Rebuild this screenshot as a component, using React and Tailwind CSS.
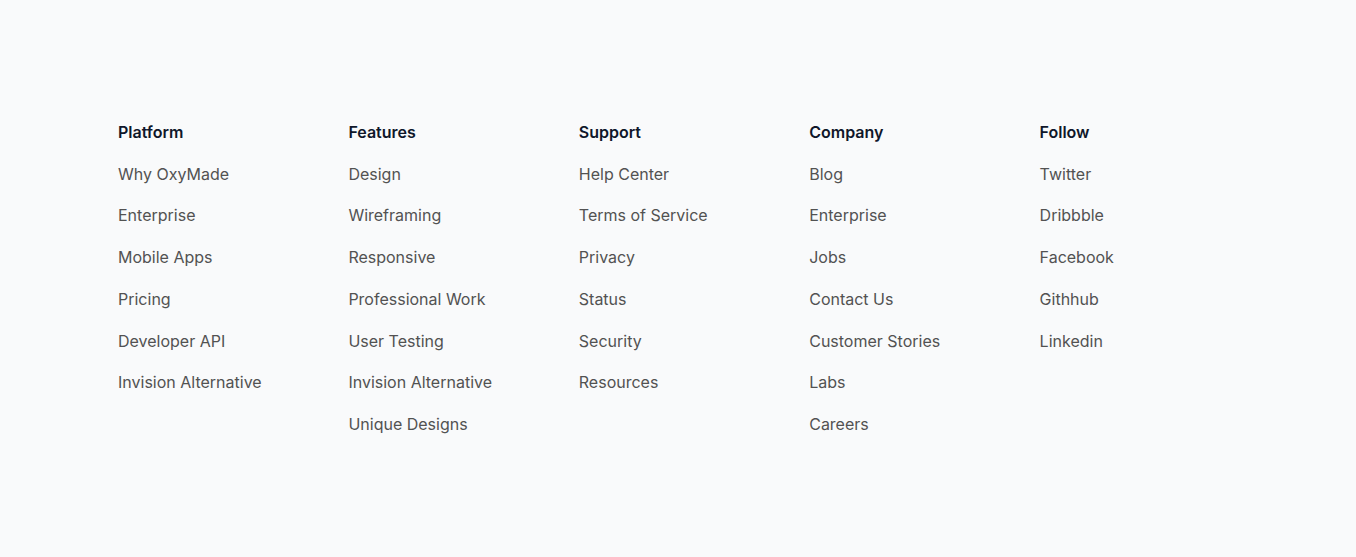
const columns = [
  { title: "Platform", links: ["Why OxyMade", "Enterprise", "Mobile Apps", "Pricing", "Developer API", "Invision Alternative"] },
  { title: "Features", links: ["Design", "Wireframing", "Responsive", "Professional Work", "User Testing", "Invision Alternative", "Unique Designs"] },
  { title: "Support", links: ["Help Center", "Terms of Service", "Privacy", "Status", "Security", "Resources"] },
  { title: "Company", links: ["Blog", "Enterprise", "Jobs", "Contact Us", "Customer Stories", "Labs", "Careers"] },
  { title: "Follow", links: ["Twitter", "Dribbble", "Facebook", "Githhub", "Linkedin"] },
];

export default function App() {
  return (
    <div className="min-h-screen bg-[#f9fafb]" style={{ fontFamily: "Inter, 'Noto Sans', sans-serif" }}>
      <footer className="mx-auto max-w-7xl px-20 pt-[120px] pb-[118px]">
        <div className="grid grid-cols-5 gap-8">
          {columns.map((col) => (
            <div key={col.title}>
              <h3 className="text-base font-semibold leading-[25.7px] text-[#0f172a]">{col.title}</h3>
              <ul className="flex flex-col">
                {col.links.map((l, i) => (
                  <li key={i} className="mt-4 text-base leading-[25.7px] text-[#525252]">
                    <a href="#">{l}</a>
                  </li>
                ))}
              </ul>
            </div>
          ))}
        </div>
      </footer>
    </div>
  );
}
